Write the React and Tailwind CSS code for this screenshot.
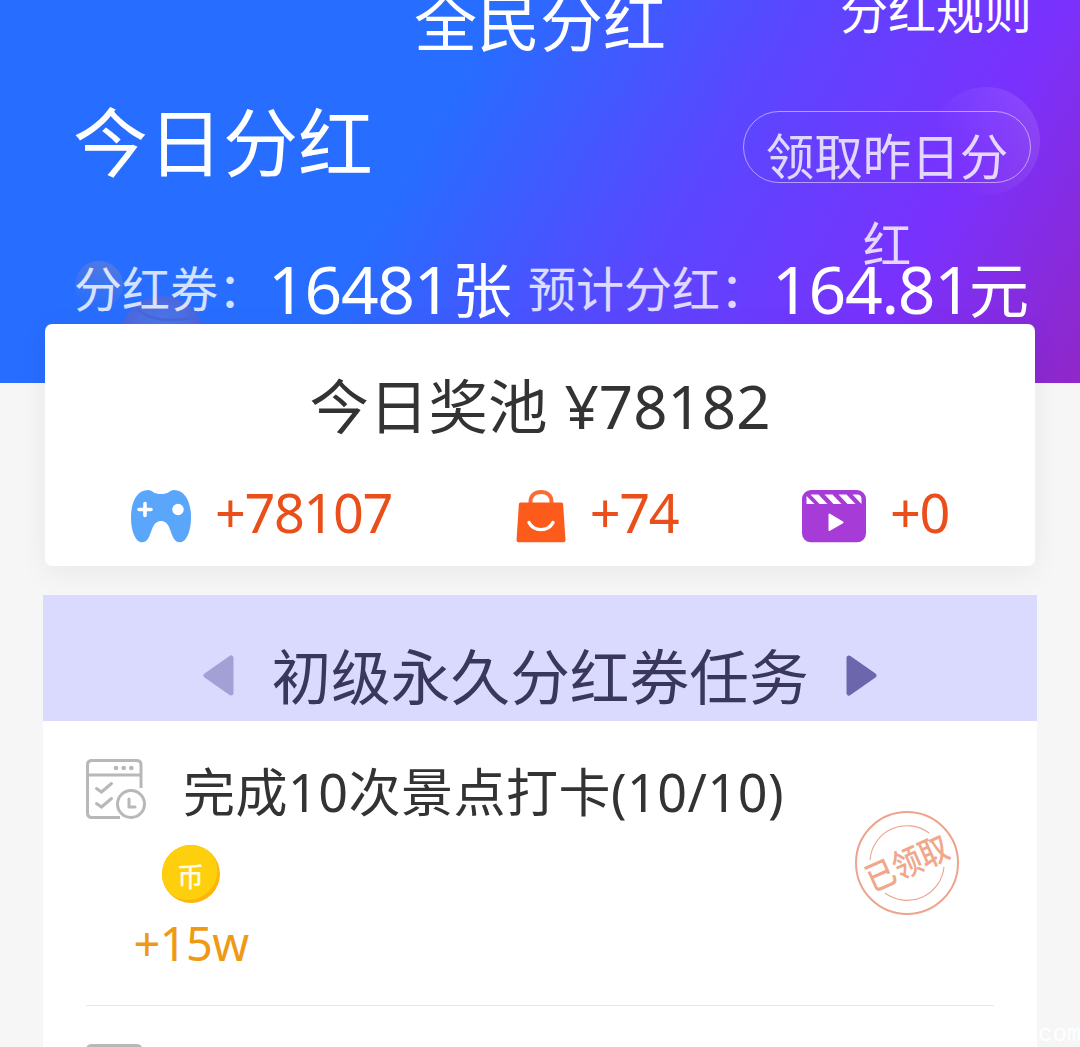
import React from "react";

const income = [
  { id: "game", value: "+78107", Icon: GamepadIcon },
  { id: "shop", value: "+74", Icon: BagIcon },
  { id: "video", value: "+0", Icon: ClapperIcon },
];

const tasks = [
  { id: 1, title: "完成10次景点打卡(10/10)", reward: "+15w", claimed: true },
  { id: 2, title: "", reward: "", claimed: false },
];

function GamepadIcon() {
  return (
    <svg width="60" height="53" viewBox="0 0 60 53">
      <path
        d="M17 0C19.500 0 20.500 1 22 2C25.500 4.800 34.500 4.800 38 2C39.500 1 40.500 0 43 0C54 0 60 12 60 27C60 42 55 52.300 49 52.300C38 52.300 42 31 30 31C18 31 22 52.300 11 52.300C5 52.300 0 42 0 27C0 12 6 0 17 0Z"
        fill="#5aa6fb"
      />
      <path d="M14 13.500V25.500M8 19.500H20" stroke="#fff" strokeWidth="3.600" strokeLinecap="round" />
      <circle cx="47" cy="19.500" r="5.700" fill="#fff" />
    </svg>
  );
}

function BagIcon() {
  return (
    <svg width="50" height="53" viewBox="0 0 50 53">
      <path d="M14.500 14V12C14.500 5.500 19 2 25 2S35.500 5.500 35.500 12V14" fill="none" stroke="#fb6a33" strokeWidth="4" />
      <path d="M4.500 12.500H45.500Q47 12.500 47.100 14L49.500 50Q49.600 52.300 47.500 52.300H2.500Q.4 52.300 .5 50L2.900 14Q3 12.500 4.500 12.500Z" fill="#fd5b1c" />
      <path d="M13 32.500C18 42 32 42 37 32.500" fill="none" stroke="#fff" strokeWidth="3.400" strokeLinecap="round" />
    </svg>
  );
}

function ClapperIcon() {
  return (
    <svg width="64" height="53" viewBox="0 0 64 53">
      <rect width="64" height="52.300" rx="9" fill="#a63bd8" />
      <path d="M4.500 6L12.500 14H4.500ZM8.500 4.500H16.500L25.500 14H17.500ZM22.500 4.500H30.500L39.500 14H31.500ZM36.500 4.500H44.500L53.500 14H45.500ZM50.500 4.500H55Q59.500 4.500 59.500 9V14Z" fill="#fff" />
      <path d="M27.500 24.500L40.500 32.300L27.500 40Z" fill="#fff" stroke="#fff" strokeWidth="2" strokeLinejoin="round" />
    </svg>
  );
}

function TaskIcon() {
  return (
    <svg className="-mt-[2px] shrink-0" width="60" height="60" viewBox="0 0 60 60" fill="none" stroke="#b8b8b8" strokeWidth="3">
      <path d="M55 29V6Q55 1.500 50.500 1.500H6Q1.500 1.500 1.500 6V54Q1.500 58.500 6 58.500H34" />
      <path d="M2 16H55" />
      <path d="M10.500 29.500L15.500 33L25.500 24.500M10.500 44.500L15.500 48L25.500 39.500" strokeLinecap="round" />
      <path d="M43 40V48H49" strokeLinecap="round" strokeLinejoin="round" />
      <circle cx="45" cy="45" r="13.500" />
      <g fill="#b8b8b8" stroke="none">
        <circle cx="30" cy="9" r="2.300" />
        <circle cx="37.700" cy="9" r="2.300" />
        <circle cx="45.300" cy="9" r="2.300" />
      </g>
    </svg>
  );
}

function CoinIcon() {
  return (
    <svg width="58" height="58" viewBox="0 0 58 58">
      <defs>
        <clipPath id="coin">
          <circle cx="29" cy="29" r="29" />
        </clipPath>
      </defs>
      <circle cx="29" cy="29" r="29" fill="#fdb40d" />
      <circle cx="26" cy="25.500" r="29.500" fill="#fecf0c" clipPath="url(#coin)" />
      <text x="28.500" y="41.500" textAnchor="middle" fontSize="27" fontWeight="500" fill="#fffbe6" fontFamily="'Noto Sans CJK SC', sans-serif">
        币
      </text>
    </svg>
  );
}

function ClaimedStamp() {
  return (
    <svg className="absolute left-[811px] top-[89px]" width="106" height="106" viewBox="-53 -53 106 106" fill="none" stroke="#eda48c">
      <circle r="51" strokeWidth="2" />
      <path d="M-37 -2.700A37 37 0 0 1 22 -30M-22 30A37 37 0 0 0 37 3.700" strokeWidth="1.100" />
      <text
        transform="rotate(-24) scale(0.94 1.08)"
        y="11.500"
        textAnchor="middle"
        fontSize="31"
        fontWeight="500"
        fill="#f0a78c"
        stroke="none"
        fontFamily="'Noto Sans CJK SC', sans-serif"
      >
        已领取
      </text>
    </svg>
  );
}

function Arrow({ className }) {
  return (
    <svg className={className} width="31" height="41" viewBox="0 0 31 41">
      <path d="M3 3L28 20.500L3 38Z" fill="currentColor" stroke="currentColor" strokeWidth="5" strokeLinejoin="round" />
    </svg>
  );
}

function HeaderDecor() {
  return (
    <svg className="absolute left-0 top-0" width="1080" height="383" viewBox="0 0 1080 383">
      <defs>
        <linearGradient id="bubble" x1="0.200" y1="0.700" x2="1" y2="0.300">
          <stop offset="0" stopColor="#fff" stopOpacity="0" />
          <stop offset="1" stopColor="#fff" stopOpacity="0.110" />
        </linearGradient>
        <linearGradient id="dot" x1="0.600" y1="0" x2="0.300" y2="1">
          <stop offset="0" stopColor="#7f88c0" stopOpacity="0.450" />
          <stop offset="1" stopColor="#7f88c0" stopOpacity="0" />
        </linearGradient>
        <radialGradient id="planet" cx="0.500" cy="0.450" r="0.550">
          <stop offset="0" stopColor="#4a7af0" />
          <stop offset="0.550" stopColor="#4b70e4" />
          <stop offset="1" stopColor="#5a5fd0" stopOpacity="0.750" />
        </radialGradient>
      </defs>
      <circle cx="986" cy="141" r="54" fill="url(#bubble)" />
      <circle cx="99" cy="285" r="24" fill="url(#dot)" />
      <circle cx="162" cy="338" r="42" fill="url(#planet)" />
      <path d="M136 308Q154 326 196 317" fill="none" stroke="#4767dc" strokeWidth="2.500" />
    </svg>
  );
}

export default function App() {
  return (
    <div className="relative h-[1047px] w-[1080px] overflow-hidden bg-[#f6f6f6] font-['Noto_Sans','Noto_Sans_CJK_SC',sans-serif] whitespace-nowrap">
      <header className="relative h-[383px] bg-[linear-gradient(120deg,#276dff_0%,#276dff_39%,#5b46ff_62%,#7a31fd_82%,#9027c8_100%)] text-white">
        <HeaderDecor />
        <div className="relative grid h-[60px] grid-cols-3">
          <span />
          <h1 className="-mt-[20px] h-[84px] text-center text-[63px] leading-[84px]">全民分红</h1>
          <span className="-mt-[22px] pr-[48px] text-right text-[48px] leading-[66px]">分红规则</span>
        </div>

        <div className="relative flex h-[187px] items-start justify-between pr-[49px] pl-[73px]">
          <h2 className="mt-[30px] text-[75px] leading-[104px]">今日分红</h2>
          <button className="mt-[51px] h-[72px] w-[288px] rounded-full border border-white/50 px-[20px] text-center text-[48.500px] leading-[88px] whitespace-normal text-white/80">
            <span className="block h-[72px]">领取昨日分红</span>
          </button>
        </div>

        <div className="relative flex h-[84px] items-center pl-[74px] leading-[84px]">
          <span className="text-[48px] text-white/80">分红券：</span>
          <span className="flex w-[262px] text-[60px]">
            <span className="-mt-px w-[186px] pl-[2px] text-[66px] tracking-[-1.300px]">16481</span>
            <span className="mt-px">张</span>
          </span>
          <span className="text-[48px] text-white/80">预计分红：</span>
          <span className="flex text-[60px]">
            <span className="-mt-px w-[201px] pl-[4px] text-[66px] tracking-[-1.300px]">164.81</span>
            <span className="mt-px">元</span>
          </span>
        </div>
      </header>

      <section className="relative mx-[45px] -mt-[59px] h-[242px] rounded-[7px] bg-white shadow-[0_6px_30px_rgba(0,0,0,0.06)]">
        <div className="flex h-[164px] items-center justify-center gap-[17px] text-[59.500px] leading-[84px] text-[#333]">
          <span>今日奖池</span>
          <span className="text-[60px]">¥78182</span>
        </div>
        <div className="flex items-center justify-between px-[86px]">
          {income.map(({ id, value, Icon }) => (
            <div key={id} className="flex h-[56px] items-center gap-[24px]">
              <Icon />
              <span className="-mt-[8px] text-[54px] leading-[56px] tracking-[-1.400px] text-[#ea4f1b]">{value}</span>
            </div>
          ))}
        </div>
      </section>

      <section className="mx-[43px] mt-[29px] bg-white">
        <div className="flex h-[126px] items-center justify-center gap-[37px] bg-[#dadaff] pt-[34px] text-[#39375c]">
          <Arrow className="rotate-180 text-[#a3a0d5]" />
          <h3 className="mt-[4px] text-[59.700px] leading-[84px]">初级永久分红券任务</h3>
          <Arrow className="text-[#6c66ad]" />
        </div>
        {tasks.map((task) => (
          <div key={task.id} className="relative mx-[43px] h-[285px] border-b border-[#e8e8e8] pt-[38px]">
            <div className="flex h-[62px] items-center gap-[37px]">
              <TaskIcon />
              <span className="mt-[4px] text-[52px] leading-[62px] tracking-[0.500px] text-[#333]">{task.title}</span>
            </div>
            {task.reward && (
              <div className="mt-[24px] flex w-[210px] flex-col items-center">
                <CoinIcon />
                <span className="mt-[8px] text-[47px] leading-[64px] tracking-[-0.700px] text-[#ee9a14]">{task.reward}</span>
              </div>
            )}
            {task.claimed && (
              <div className="absolute -left-[43px] top-0">
                <ClaimedStamp />
              </div>
            )}
          </div>
        ))}
      </section>

      <span className="absolute top-[1019px] left-[1038px] font-['Liberation_Mono',monospace] text-[24px] leading-[32px] text-white">com</span>
    </div>
  );
}
